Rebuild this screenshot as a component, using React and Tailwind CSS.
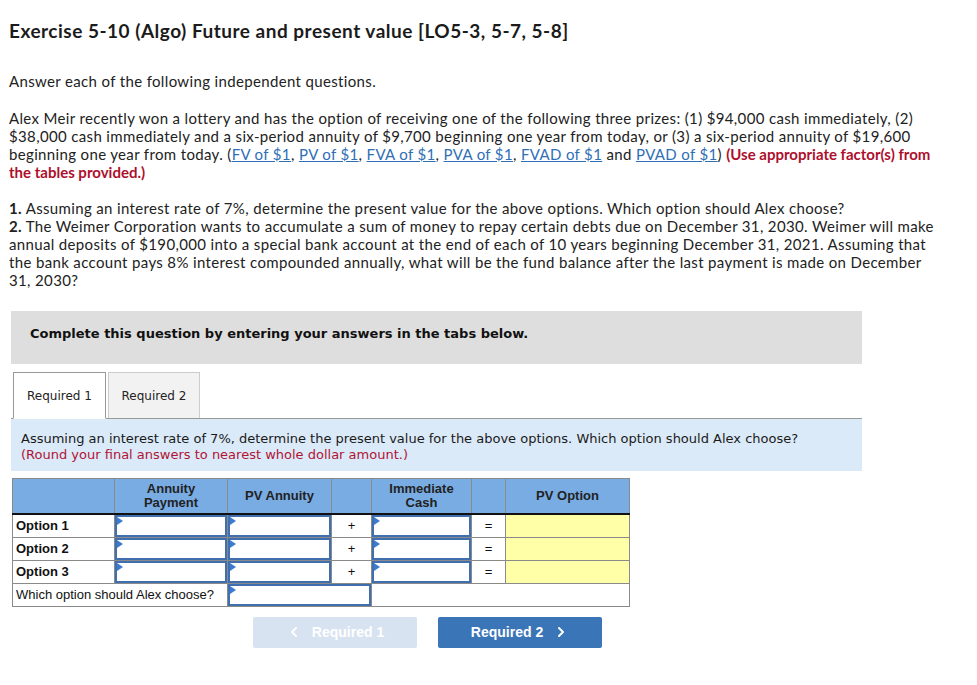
import { ChevronLeft, ChevronRight } from "lucide-react";

const links = ["FV of $1", "PV of $1", "FVA of $1", "PVA of $1", "FVAD of $1"];

const Flag = () => (
  <span className="absolute left-0 top-0 w-0 h-0 border-t-[4px] border-b-[4px] border-l-[6px] border-t-transparent border-b-transparent border-l-[#3b7bd0]" />
);

const InputCell = ({ colSpan }) => (
  <td colSpan={colSpan} className="p-0 border border-[#8a8a8a] h-[22px]">
    <div className="relative h-[22px] bg-white border-2 border-[#3f6fae]">
      <Flag />
    </div>
  </td>
);

const OptionRow = ({ label }) => (
  <tr>
    <td className="border border-[#8a8a8a] px-[3px] text-[13px] font-bold text-[#111] h-[22px]">{label}</td>
    <InputCell />
    <InputCell />
    <td className="border border-[#8a8a8a] text-center text-[13px]">+</td>
    <InputCell />
    <td className="border border-[#8a8a8a] text-center text-[13px]">=</td>
    <td className="border border-[#8a8a8a] bg-[#ffffa8]" />
  </tr>
);

export default function App() {
  return (
    <div className="min-h-[685px] bg-white text-[#222] pl-[9px] pt-[19px] font-['Lato',sans-serif]">
      <h1 className="text-[19px] leading-[24px] font-bold tracking-[0.5px] text-[#1b1b1b]">
        Exercise 5-10 (Algo) Future and present value [LO5-3, 5-7, 5-8]
      </h1>

      <div className="text-[15px] leading-[18px] tracking-[0.35px]">
        <p className="mt-[29px]">Answer each of the following independent questions.</p>

        <p className="mt-[19px]">
          Alex Meir recently won a lottery and has the option of receiving one of the following three prizes: (1) $94,000 cash immediately, (2)
          <br />
          $38,000 cash immediately and a six-period annuity of $9,700 beginning one year from today, or (3) a six-period annuity of $19,600
          <br />
          beginning one year from today. (
          {links.map((l, i) => (
            <span key={l}>
              <a className="text-[#2f6fb6] underline">{l}</a>
              {i < links.length - 1 ? ", " : " "}
            </span>
          ))}
          and <a className="text-[#2f6fb6] underline">PVAD of $1</a>){" "}
          <span className="font-bold tracking-normal text-[#ad0f2c]">(Use appropriate factor(s) from</span>
          <br />
          <span className="font-bold tracking-normal text-[#ad0f2c]">the tables provided.)</span>
        </p>

        <p className="mt-[18px]">
          <b>1.</b> Assuming an interest rate of 7%, determine the present value for the above options. Which option should Alex choose?
          <br />
          <b>2.</b> The Weimer Corporation wants to accumulate a sum of money to repay certain debts due on December 31, 2030. Weimer will make
          <br />
          annual deposits of $190,000 into a special bank account at the end of each of 10 years beginning December 31, 2021. Assuming that
          <br />
          the bank account pays 8% interest compounded annually, what will be the fund balance after the last payment is made on December
          <br />
          31, 2030?
        </p>
      </div>

      <div className="ml-[2px] w-[851px] mt-[22px] font-['DejaVu_Sans',Verdana,sans-serif]">
        <div className="h-[53px] bg-[#dedede] flex items-center pl-[19px] pb-[8px] text-[13px] font-bold text-[#111]">
          Complete this question by entering your answers in the tabs below.
        </div>

        <div className="mt-[8px] flex items-end gap-[2px] pl-[2px] border-b border-[#999]">
          <div className="w-[93px] h-[47px] -mb-px bg-white border border-[#999] border-b-white flex items-center justify-center text-[12px]">
            Required 1
          </div>
          <div className="w-[92px] h-[46px] bg-[#f2f2f2] border border-[#ccc] border-b-0 flex items-center justify-center text-[12px]">
            Required 2
          </div>
        </div>

        <div className="h-[52px] bg-[#dbeaf8] pl-[10px] pt-[12px] text-[13px] leading-[16px]">
          <div className="text-[#1a1a1a]">
            Assuming an interest rate of 7%, determine the present value for the above options. Which option should Alex choose?
          </div>
          <div className="text-[#b01435]">(Round your final answers to nearest whole dollar amount.)</div>
        </div>

        <table className="mt-[7px] ml-px border-collapse table-fixed w-[617px] font-['Liberation_Sans',Arial,sans-serif] text-[#111]">
          <colgroup>
            <col className="w-[102px]" />
            <col className="w-[113px]" />
            <col className="w-[104px]" />
            <col className="w-[40px]" />
            <col className="w-[100px]" />
            <col className="w-[34px]" />
            <col className="w-[124px]" />
          </colgroup>
          <thead>
            <tr className="bg-[#79ace3] text-[13px] leading-[14px] font-bold text-[#222]">
              <th className="border border-[#8a8a8a] border-b-2 border-b-[#111] h-[35px]" />
              <th className="border border-[#8a8a8a] border-b-2 border-b-[#111]">Annuity<br />Payment</th>
              <th className="border border-[#8a8a8a] border-b-2 border-b-[#111]">PV Annuity</th>
              <th className="border border-[#8a8a8a] border-b-2 border-b-[#111]" />
              <th className="border border-[#8a8a8a] border-b-2 border-b-[#111]">Immediate<br />Cash</th>
              <th className="border border-[#8a8a8a] border-b-2 border-b-[#111]" />
              <th className="border border-[#8a8a8a] border-b-2 border-b-[#111]">PV Option</th>
            </tr>
          </thead>
          <tbody>
            <OptionRow label="Option 1" />
            <OptionRow label="Option 2" />
            <OptionRow label="Option 3" />
            <tr>
              <td colSpan={2} className="border border-[#8a8a8a] px-[3px] text-[13px] h-[22px]">
                Which option should Alex choose?
              </td>
              <InputCell colSpan={2} />
              <td colSpan={3} className="border border-[#8a8a8a]" />
            </tr>
          </tbody>
        </table>

        <div className="mt-[10px] ml-[242px] flex gap-[21px] font-['Liberation_Sans',Arial,sans-serif] text-[14px] font-bold text-white">
          <button className="w-[164px] h-[31px] rounded-[2px] bg-[#d7e3f0] flex items-center justify-center gap-[10px]">
            <ChevronLeft size={16} strokeWidth={3} />
            Required 1
          </button>
          <button className="w-[164px] h-[31px] rounded-[2px] bg-[#3a75b8] flex items-center justify-center gap-[10px]">
            Required 2
            <ChevronRight size={16} strokeWidth={3} />
          </button>
        </div>
      </div>
    </div>
  );
}
